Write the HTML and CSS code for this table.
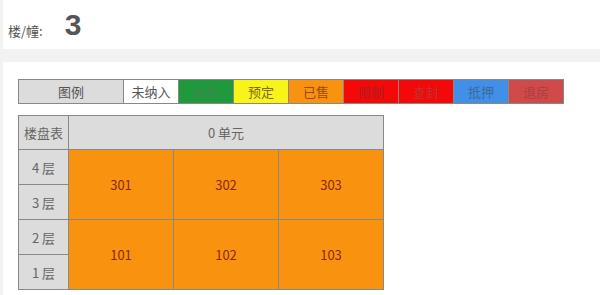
FILE: index.html
```html
<!DOCTYPE html>
<html lang="zh-CN">
<head>
    <meta charset="UTF-8">
    <meta name="viewport" content="width=device-width, initial-scale=1.0">
    <title>楼盘表</title>
    <link rel="stylesheet" href="styles.css">
</head>
<body>

<div class="header">
    <span class="label">楼/幢:</span>
    <span class="building">3</span>
</div>

<div class="panel">
    <table class="legend">
        <colgroup>
            <col class="col-title">
            <col span="8" class="col-status">
        </colgroup>
        <tr>
            <td class="legend-title">图例</td>
            <td class="st-none">未纳入</td>
            <td class="st-sale">销售</td>
            <td class="st-book">预定</td>
            <td class="st-sold">已售</td>
            <td class="st-limit">限制</td>
            <td class="st-seal">查封</td>
            <td class="st-mortgage">抵押</td>
            <td class="st-return">退房</td>
        </tr>
    </table>

    <table class="floors">
        <colgroup>
            <col class="col-floor">
            <col span="3" class="col-room">
        </colgroup>
        <tr class="head">
            <td class="floor">楼盘表</td>
            <td colspan="3">0 单元</td>
        </tr>
        <tr>
            <td class="floor">4 层</td>
            <td class="room st-sold" rowspan="2">301</td>
            <td class="room st-sold" rowspan="2">302</td>
            <td class="room st-sold" rowspan="2">303</td>
        </tr>
        <tr>
            <td class="floor">3 层</td>
        </tr>
        <tr>
            <td class="floor">2 层</td>
            <td class="room st-sold" rowspan="2">101</td>
            <td class="room st-sold" rowspan="2">102</td>
            <td class="room st-sold" rowspan="2">103</td>
        </tr>
        <tr>
            <td class="floor">1 层</td>
        </tr>
    </table>
</div>

</body>
</html>
```

FILE: styles.css
```css
body {
    background-color: #f2f2f2;
    font-family: 'Noto Sans CJK SC', 'Noto Sans', sans-serif;
    font-size: 13px;
    color: #555;
    margin: 0;
    padding: 0;
    overflow: hidden;
}

.header {
    background-color: #fff;
    height: 49px;
    margin-left: 3px;
    display: flex;
    align-items: flex-end;
    padding-left: 5px;
    margin-bottom: 13px;
}

.label {
    font-size: 13px;
    color: #555;
    margin-bottom: 9px;
}

.building {
    font-family: 'Liberation Sans', Arial, sans-serif;
    font-size: 30px;
    font-weight: bold;
    color: #555;
    margin-left: 22px;
    margin-bottom: 7px;
}

.panel {
    background-color: #fff;
    margin-left: 3px;
    padding: 17px 15px 6px;
}

table {
    border-collapse: collapse;
    table-layout: fixed;
}

td {
    border: 1px solid #888;
    text-align: center;
    padding: 0;
    white-space: nowrap;
}

/* legend strip */
.legend {
    width: 546px;
}

.legend .col-title {
    width: 105px;
}

.legend .col-status {
    width: 55px;
}

.legend tr {
    height: 24px;
}

.legend .legend-title {
    background-color: #dcdcdc;
    color: #555;
}

/* floor grid */
.floors {
    margin-top: 11px;
    width: 366px;
}

.floors .col-floor {
    width: 50px;
}

.floors .col-room {
    width: 105px;
}

.floors tr {
    height: 35px;
}

.floors tr.head {
    height: 34px;
}

.floors .head td {
    background-color: #dcdcdc;
    color: #666;
}

.floors .floor {
    background-color: #dcdcdc;
    color: #666;
}

/* status colours */
.st-none {
    background-color: #fff;
    color: #555;
}

.st-sale {
    background-color: #1e9a3c;
    color: #3a8a4e;
}

.st-book {
    background-color: #f8f41a;
    color: #806a20;
}

.st-sold {
    background-color: #f8920f;
    color: #9a4a10;
}

.st-limit {
    background-color: #f50808;
    color: #a82020;
}

.st-seal {
    background-color: #f50808;
    color: #b83535;
    border-left-color: #f07070;
}

.st-mortgage {
    background-color: #418fe6;
    color: #3c6a9a;
}

.st-return {
    background-color: #d04a4a;
    color: #a84040;
}

.floors .room {
    color: #8a2a0a;
}
```
